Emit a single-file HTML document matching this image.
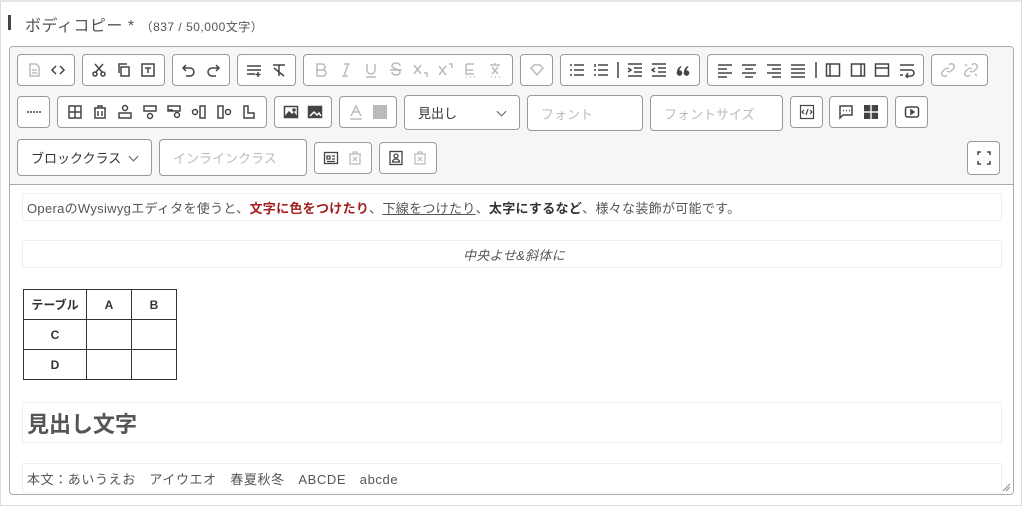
<!DOCTYPE html>
<html><head><meta charset="utf-8"><style>
*{box-sizing:border-box;margin:0;padding:0}
body{width:1024px;height:506px;background:#fff;font-family:"Liberation Sans","Noto Sans CJK JP",sans-serif;position:relative;overflow:hidden;color:#444}
.outer{position:absolute;left:0;top:0;width:1022px;height:506px;border:1px solid #ddd;border-top:2px solid #e6e6e6}
.bar{position:absolute;left:8px;top:15px;width:3px;height:15px;background:#444}
.title{position:absolute;left:25px;top:12px;font-size:16px;color:#555;letter-spacing:.5px}
.title small{font-size:12px;color:#555;margin-left:6px}
.ed{position:absolute;left:9px;top:46px;width:1005px;height:449px;border:1px solid #aaa;border-radius:4px;background:#fff;overflow:hidden}
.tb{position:absolute;left:0;top:0;width:100%;height:138px;background:#f6f6f6;border-bottom:1px solid #aaa}
.g{position:absolute;border:1px solid #999;border-radius:4px;background:#fff;display:flex;align-items:center;justify-content:space-evenly;height:32px}
.g svg{width:16px;height:16px;fill:none;stroke:#444;stroke-width:1.5}
.lt svg{stroke:#bbb}
.sel{position:absolute;border:1px solid #999;border-radius:4px;background:#fff;font-size:13px;color:#333;padding-left:13px;display:flex;align-items:center}
.sel.ph{color:#bbb}
.sel .v{position:absolute;right:14px;top:50%;width:7px;height:7px;border-right:1.4px solid #555;border-bottom:1.4px solid #555;transform:translateY(-70%) rotate(45deg)}
.p{position:absolute;left:12px;width:980px;border:1px solid #eef0f0;font-size:13px;color:#555;padding-left:4px;display:flex;align-items:center;letter-spacing:.3px}
table{position:absolute;left:13px;top:242px;border-collapse:collapse}
td{border:1.5px solid #333;width:45px;height:30px;text-align:center;font-size:12px;font-weight:bold;color:#333}
td.f{width:63px}
</style></head><body>
<div class="outer"></div>
<div class="bar"></div>
<div class="title">ボディコピー *<small>（837 / 50,000文字）</small></div>
<div class="ed">
<div class="tb">
<div class="g" style="left:7px;top:7px;width:58px">
<svg style="stroke:#bbb"><path d="M4 2h6l3 3v9H4z M6 8h5M6 11h5"/></svg>
<svg><path d="M6 4L2 8l4 4M10 4l4 4-4 4"/></svg></div>
<div class="g" style="left:72px;top:7px;width:83px">
<svg><circle cx="4" cy="12" r="2"/><circle cx="12" cy="12" r="2"/><path d="M5 10L12 2M11 10L4 2"/></svg>
<svg><path d="M5 5h8v9H5zM3 11V2h8"/></svg>
<svg><rect x="2" y="2" width="12" height="12"/><path d="M5 6h6M8 6v5"/></svg></div>
<div class="g" style="left:162px;top:7px;width:58px">
<svg><path d="M5 3L2 6l3 3M2 6h7a4 4 0 010 8H5"/></svg>
<svg><path d="M11 3l3 3-3 3M14 6H7a4 4 0 000 8h4"/></svg></div>
<div class="g" style="left:227px;top:7px;width:59px">
<svg><path d="M1 4h14M1 8h14M1 12h8M12 10v5M9.5 12.5h5"/></svg>
<svg><path d="M2 3h12M8 3v11M3 6l10 8"/></svg></div>
<div class="g lt" style="left:293px;top:7px;width:210px">
<svg><path d="M4 2h5a3 3 0 010 6H4zM4 8h6a3 3 0 010 6H4z"/></svg>
<svg><path d="M6 2h6M4 14h6M10 2L6 14"/></svg>
<svg><path d="M4 2v6a4 4 0 008 0V2M3 15h10"/></svg>
<svg><path d="M12 4a4 3 0 00-8 0c0 3 8 3 8 6a4 3 0 01-8 0M2 8h12"/></svg>
<svg><path d="M2 3l7 9M9 3l-7 9M12 11h3v4"/></svg>
<svg><path d="M2 4l7 9M9 4l-7 9M12 2h3v4"/></svg>
<svg><path d="M4 2h8M4 8h7M4 2v10h8M4 15h1M8 15h1M12 15h1"/></svg>
<svg><path d="M8 1v2M3 3h10M5 5l6 7M11 5l-6 7M4 15h1M8 15h1M12 15h1"/></svg></div>
<div class="g lt" style="left:510px;top:7px;width:33px">
<svg><path d="M2 6l3-3h6l3 3-6 7z"/></svg></div>
<div class="g" style="left:550px;top:7px;width:140px">
<svg><path d="M1 3h2M1 8h2M1 13h2M5 3h10M5 8h10M5 13h10"/></svg>
<svg><path d="M2 2v3M1 8h2M1 13h2M5 3h10M5 8h10M5 13h10"/></svg>
<svg style="width:2px"><path d="M1 0v16"/></svg>
<svg><path d="M1 2h14M7 6h8M7 10h8M1 14h14M1 6l3 2-3 2"/></svg>
<svg><path d="M1 2h14M7 6h8M7 10h8M1 14h14M4 6L1 8l3 2"/></svg>
<svg style="fill:#444;stroke:none"><circle cx="4.5" cy="11" r="2.8"/><circle cx="11.5" cy="11" r="2.8"/><path d="M2 10.5C2 7 3.5 5 6 4l.5 1C5 6 4.3 7.5 4.3 9zM9 10.5C9 7 10.5 5 13 4l.5 1C12 6 11.3 7.5 11.3 9z"/></svg></div>
<div class="g" style="left:697px;top:7px;width:217px">
<svg><path d="M1 3h14M1 7h9M1 11h14M1 15h9"/></svg>
<svg><path d="M1 3h14M4 7h8M1 11h14M4 15h8"/></svg>
<svg><path d="M1 3h14M6 7h9M1 11h14M6 15h9"/></svg>
<svg><path d="M1 3h14M1 7h14M1 11h14M1 15h14"/></svg>
<svg style="width:2px"><path d="M1 0v16"/></svg>
<svg><rect x="1.5" y="2" width="13" height="12"/><path d="M5 2v12"/></svg>
<svg><rect x="1.5" y="2" width="13" height="12"/><path d="M11 2v12"/></svg>
<svg><rect x="1.5" y="2" width="13" height="12"/><path d="M1.5 6h13"/></svg>
<svg><path d="M1 3h14M1 8h11a3 3 0 010 6H7M9 11l-2 3 2 2M1 13h3"/></svg></div>
<div class="g lt" style="left:921px;top:7px;width:57px">
<svg><path d="M7 9a3 3 0 004 0l3-3a3 3 0 00-4-4L9 3M9 7a3 3 0 00-4 0L2 10a3 3 0 004 4l1-1"/></svg>
<svg><path d="M7 9a3 3 0 004 0l3-3a3 3 0 00-4-4L9 3M9 7a3 3 0 00-4 0L2 10a3 3 0 004 4l1-1M2 2l2 2M14 14l-2-2"/></svg></div>
<div class="g" style="left:7px;top:49px;width:33px">
<svg><path d="M1 8h14" stroke-dasharray="2 1"/></svg></div>
<div class="g" style="left:47px;top:49px;width:210px">
<svg><rect x="2" y="2" width="12" height="12"/><path d="M2 8h12M8 2v12"/></svg>
<svg><path d="M2 4h12M6 4V2h4v2M3 4v10h10V4M6 7v5M10 7v5"/></svg>
<svg><circle cx="8" cy="4" r="2.5"/><rect x="2" y="9" width="12" height="5"/></svg>
<svg><rect x="2" y="2" width="12" height="5"/><circle cx="8" cy="12" r="2.5"/></svg>
<svg><rect x="2" y="2" width="12" height="5"/><circle cx="11" cy="11" r="2.5"/><path d="M2 6h5"/></svg>
<svg><circle cx="4" cy="8" r="2.5"/><rect x="9" y="2" width="5" height="12"/></svg>
<svg><rect x="2" y="2" width="5" height="12"/><circle cx="12" cy="8" r="2.5"/></svg>
<svg><path d="M3 2v12h10v-5H7V2z"/></svg></div>
<div class="g" style="left:264px;top:49px;width:58px">
<svg><rect x="1.5" y="2.5" width="13" height="11"/><path d="M2 13l4-5 3 3 2-2 3 4z" fill="#444"/><circle cx="11" cy="6" r="1" fill="#444"/></svg>
<svg><rect x="1.5" y="2.5" width="13" height="11" fill="#444"/><path d="M3 12l4-4 3 3 2-2 2 3" stroke="#fff"/></svg></div>
<div class="g" style="left:329px;top:49px;width:58px">
<svg style="stroke:#bbb"><path d="M3 12L8 2l5 10M5 8h6M2 15h12"/></svg>
<svg style="stroke:none"><rect x="1" y="1" width="14" height="14" fill="#bbb"/></svg></div>
<div class="sel" style="left:394px;top:48px;width:116px;height:35px">見出し<span class="v"></span></div>
<div class="sel ph" style="left:517px;top:48px;width:116px;height:36px">フォント</div>
<div class="sel ph" style="left:640px;top:48px;width:133px;height:36px">フォントサイズ</div>
<div class="g" style="left:780px;top:49px;width:33px">
<svg style="stroke-width:1.2"><rect x="1.5" y="1.5" width="13" height="13"/><path d="M5 6L3 8l2 2M11 6l2 2-2 2M9 5L7 11"/></svg></div>
<div class="g" style="left:819px;top:49px;width:59px">
<svg><path d="M2 2h12v9H5l-3 3z"/><path d="M5 6.5h1M8 6.5h1M11 6.5h1"/></svg>
<svg style="stroke:none;fill:#444"><rect x="1" y="1" width="6.3" height="6.3"/><rect x="8.7" y="1" width="6.3" height="6.3"/><rect x="1" y="8.7" width="6.3" height="6.3"/><rect x="8.7" y="8.7" width="6.3" height="6.3"/></svg></div>
<div class="g" style="left:885px;top:49px;width:33px">
<svg><rect x="1.5" y="3" width="13" height="10" rx="2"/><path d="M7 6v4l3-2z" fill="#444"/></svg></div>
<div class="sel" style="left:7px;top:92px;width:135px;height:37px">ブロッククラス<span class="v"></span></div>
<div class="sel ph" style="left:149px;top:92px;width:148px;height:37px">インラインクラス</div>
<div class="g" style="left:304px;top:95px;width:58px">
<svg style="stroke-width:1.3"><rect x="1.5" y="2.5" width="13" height="11"/><path d="M4 6h3v3H4zM9 6h3M9 9h3M4 11.5h8"/></svg>
<svg style="stroke:#bbb;stroke-width:1.2"><path d="M2 4h12M6 4V2h4v2M3 4v10h10V4M6 7l4 4M10 7l-4 4"/></svg></div>
<div class="g" style="left:369px;top:95px;width:58px">
<svg style="stroke-width:1.3"><rect x="2" y="1.5" width="12" height="13"/><circle cx="8" cy="6" r="2"/><path d="M4.5 12a3.5 3 0 017 0z"/></svg>
<svg style="stroke:#bbb;stroke-width:1.2"><path d="M2 4h12M6 4V2h4v2M3 4v10h10V4M6 7l4 4M10 7l-4 4"/></svg></div>
<div class="g" style="left:957px;top:94px;width:33px;height:34px">
<svg><path d="M2 5V2h3M11 2h3v3M14 11v3h-3M5 14H2v-3"/></svg></div>
</div>
<div class="p" style="top:146px;height:28px">OperaのWysiwygエディタを使うと、<span style="color:#a3201f;font-weight:bold">文字に色をつけたり</span>、<u>下線をつけたり</u>、<b style="color:#333">太字にするなど</b>、様々な装飾が可能です。</div>
<div class="p" style="top:193px;height:28px;justify-content:center;font-style:italic">中央よせ&amp;斜体に</div>
<table><tr><td class="f">テーブル</td><td>A</td><td>B</td></tr><tr><td class="f">C</td><td></td><td></td></tr><tr><td class="f">D</td><td></td><td></td></tr></table>
<div class="p" style="top:355px;height:41px;font-size:22px;font-weight:bold;color:#555;letter-spacing:0">見出し文字</div>
<div class="p" style="top:416px;height:30px;word-spacing:8px;letter-spacing:.6px">本文：あいうえお　アイウエオ　春夏秋冬　ABCDE　abcde</div>
<svg style="position:absolute;right:2px;bottom:2px;width:9px;height:9px" stroke="#888"><path d="M1 8L8 1M4 8L8 4"/></svg>
</div>
</body></html>
